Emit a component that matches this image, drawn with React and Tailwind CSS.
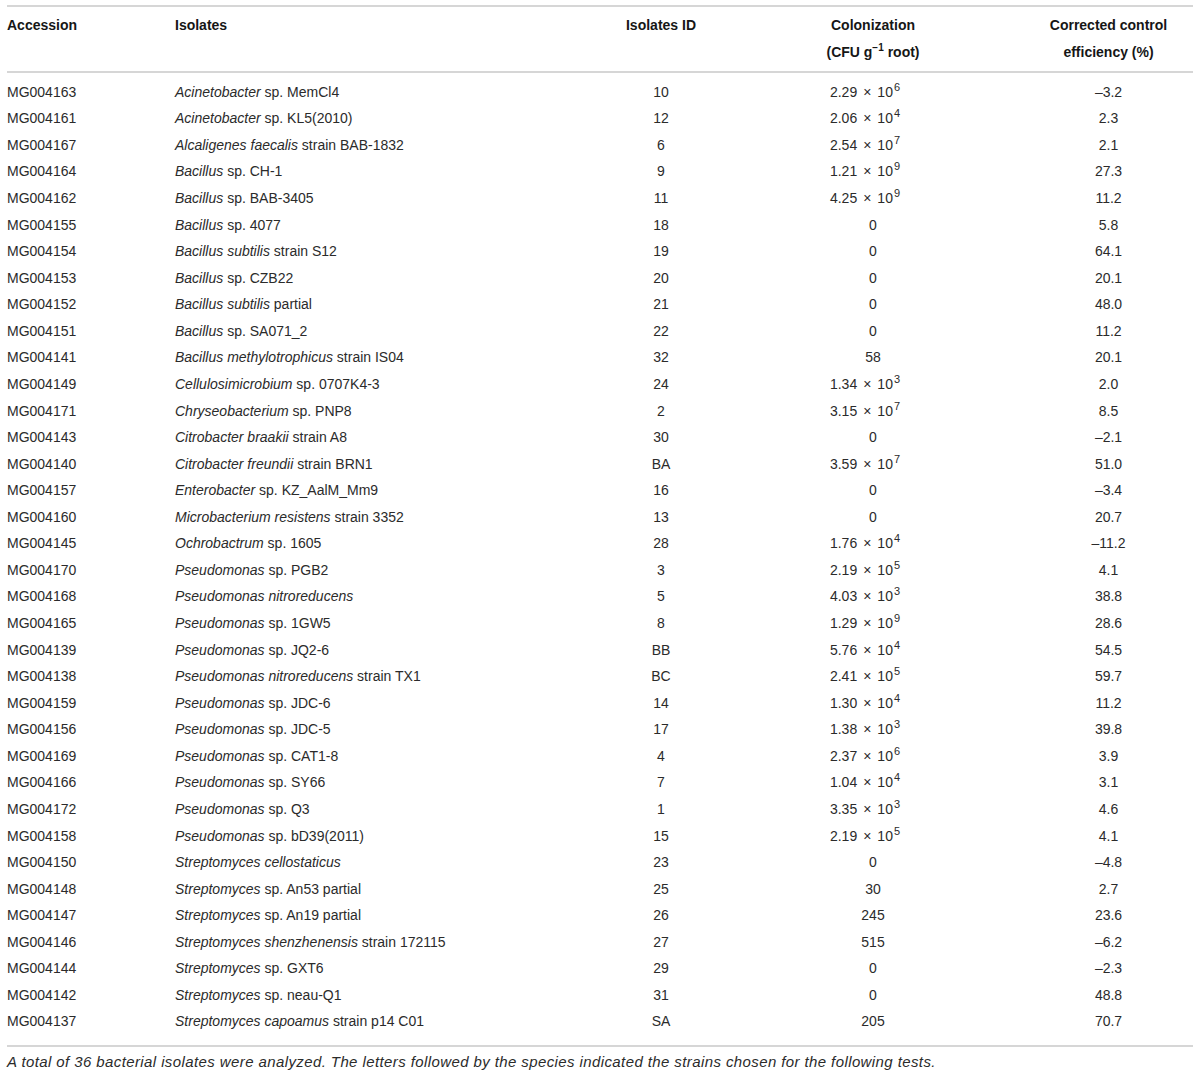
const rows = [
  ['MG004163', 'Acinetobacter', 'sp. MemCl4', '10', ['2.29', '6'], '–3.2'],
  ['MG004161', 'Acinetobacter', 'sp. KL5(2010)', '12', ['2.06', '4'], '2.3'],
  ['MG004167', 'Alcaligenes faecalis', 'strain BAB-1832', '6', ['2.54', '7'], '2.1'],
  ['MG004164', 'Bacillus', 'sp. CH-1', '9', ['1.21', '9'], '27.3'],
  ['MG004162', 'Bacillus', 'sp. BAB-3405', '11', ['4.25', '9'], '11.2'],
  ['MG004155', 'Bacillus', 'sp. 4077', '18', '0', '5.8'],
  ['MG004154', 'Bacillus subtilis', 'strain S12', '19', '0', '64.1'],
  ['MG004153', 'Bacillus', 'sp. CZB22', '20', '0', '20.1'],
  ['MG004152', 'Bacillus subtilis', 'partial', '21', '0', '48.0'],
  ['MG004151', 'Bacillus', 'sp. SA071_2', '22', '0', '11.2'],
  ['MG004141', 'Bacillus methylotrophicus', 'strain IS04', '32', '58', '20.1'],
  ['MG004149', 'Cellulosimicrobium', 'sp. 0707K4-3', '24', ['1.34', '3'], '2.0'],
  ['MG004171', 'Chryseobacterium', 'sp. PNP8', '2', ['3.15', '7'], '8.5'],
  ['MG004143', 'Citrobacter braakii', 'strain A8', '30', '0', '–2.1'],
  ['MG004140', 'Citrobacter freundii', 'strain BRN1', 'BA', ['3.59', '7'], '51.0'],
  ['MG004157', 'Enterobacter', 'sp. KZ_AalM_Mm9', '16', '0', '–3.4'],
  ['MG004160', 'Microbacterium resistens', 'strain 3352', '13', '0', '20.7'],
  ['MG004145', 'Ochrobactrum', 'sp. 1605', '28', ['1.76', '4'], '–11.2'],
  ['MG004170', 'Pseudomonas', 'sp. PGB2', '3', ['2.19', '5'], '4.1'],
  ['MG004168', 'Pseudomonas nitroreducens', '', '5', ['4.03', '3'], '38.8'],
  ['MG004165', 'Pseudomonas', 'sp. 1GW5', '8', ['1.29', '9'], '28.6'],
  ['MG004139', 'Pseudomonas', 'sp. JQ2-6', 'BB', ['5.76', '4'], '54.5'],
  ['MG004138', 'Pseudomonas nitroreducens', 'strain TX1', 'BC', ['2.41', '5'], '59.7'],
  ['MG004159', 'Pseudomonas', 'sp. JDC-6', '14', ['1.30', '4'], '11.2'],
  ['MG004156', 'Pseudomonas', 'sp. JDC-5', '17', ['1.38', '3'], '39.8'],
  ['MG004169', 'Pseudomonas', 'sp. CAT1-8', '4', ['2.37', '6'], '3.9'],
  ['MG004166', 'Pseudomonas', 'sp. SY66', '7', ['1.04', '4'], '3.1'],
  ['MG004172', 'Pseudomonas', 'sp. Q3', '1', ['3.35', '3'], '4.6'],
  ['MG004158', 'Pseudomonas', 'sp. bD39(2011)', '15', ['2.19', '5'], '4.1'],
  ['MG004150', 'Streptomyces cellostaticus', '', '23', '0', '–4.8'],
  ['MG004148', 'Streptomyces', 'sp. An53 partial', '25', '30', '2.7'],
  ['MG004147', 'Streptomyces', 'sp. An19 partial', '26', '245', '23.6'],
  ['MG004146', 'Streptomyces shenzhenensis', 'strain 172115', '27', '515', '–6.2'],
  ['MG004144', 'Streptomyces', 'sp. GXT6', '29', '0', '–2.3'],
  ['MG004142', 'Streptomyces', 'sp. neau-Q1', '31', '0', '48.8'],
  ['MG004137', 'Streptomyces capoamus', 'strain p14 C01', 'SA', '205', '70.7'],
];

function Colonization({ value }) {
  if (typeof value === 'string') return <span>{value}</span>;
  return (
    <span className="pr-[16px]">
      {value[0]}
      <span className="mx-[6px]">×</span>
      10<sup className="text-[11px] -top-[6px] ml-[1px]">{value[1]}</sup>
    </span>
  );
}

export default function App() {
  return (
    <div className="w-[1200px] h-[1077px] bg-white pt-[5px] px-[7px] text-[14px] text-[#2b2b2b] font-['Liberation_Sans',Arial,sans-serif]">
      <div className="border-t-2 border-b-2 border-[#d6d6d6]">
        {/* Header */}
        <div className="flex font-bold text-[#161616] leading-[27px] pt-[5px] pb-[5px] border-b-2 border-[#d6d6d6]">
          <div className="w-[168px]">Accession</div>
          <div className="w-[425px]">Isolates</div>
          <div className="w-[122px] text-center">Isolates ID</div>
          <div className="w-[302px] text-center">
            <div>Colonization</div>
            <div>
              (CFU g<sup className="text-[10px] -top-[6px]">−1</sup> root)
            </div>
          </div>
          <div className="w-[169px] text-center">
            <div>Corrected control</div>
            <div>efficiency (%)</div>
          </div>
        </div>

        {/* Body */}
        <div className="pt-[6px] pb-[10px]">
          {rows.map((r) => (
            <div key={r[0]} className="flex items-center h-[26.57px]">
              <div className="w-[168px]">{r[0]}</div>
              <div className="w-[425px]">
                <i>{r[1]}</i>
                {r[2] ? ' ' + r[2] : ''}
              </div>
              <div className="w-[122px] text-center">{r[3]}</div>
              <div className="w-[302px] text-center">
                <Colonization value={r[4]} />
              </div>
              <div className="w-[169px] text-center">{r[5]}</div>
            </div>
          ))}
        </div>
      </div>

      <p className="italic text-[15px] tracking-[0.4px] mt-[5px] leading-[20px]">
        A total of 36 bacterial isolates were analyzed. The letters followed by the species indicated the strains chosen for the following tests.
      </p>
    </div>
  );
}
